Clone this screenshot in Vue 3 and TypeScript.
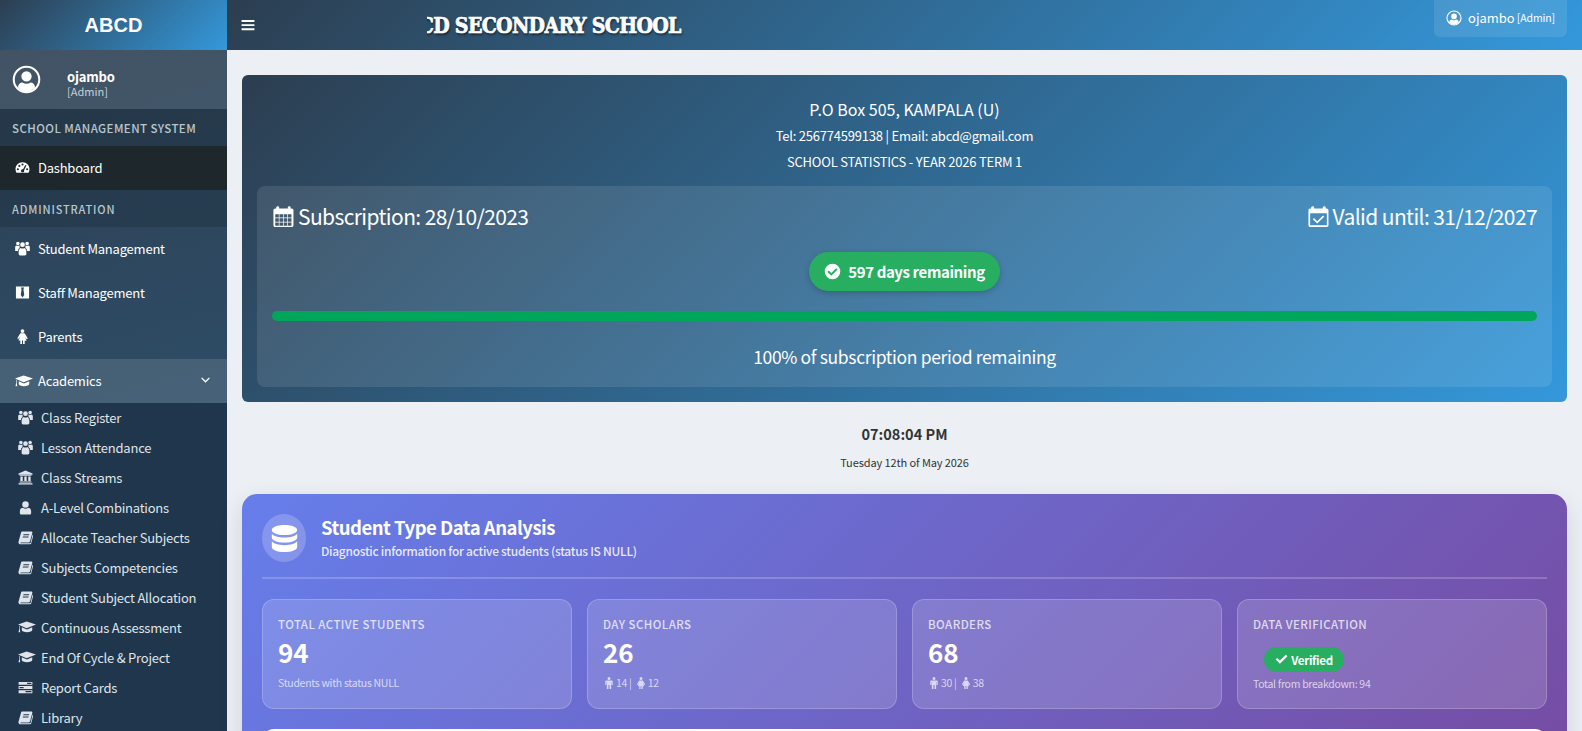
<script setup lang="ts">
// circle as a sub path, so holes and heads can sit in one path string
const dot = (x: number, y: number, r: number) =>
  `M${x - r} ${y}a${r} ${r} 0 1 0 ${r * 2} 0a${r} ${r} 0 1 0 ${-r * 2} 0z`

const calendarCells = () => {
  let d = ''
  for (let row = 0; row < 3; row++) {
    for (let col = 0; col < 4; col++) {
      d += `M${3.4 + col * 4.4} ${9.6 + row * 4.3}h3.7v3.5h-3.7z`
    }
  }
  return d
}

const calendarShell =
  'M6 1.2c.9 0 1.5.6 1.5 1.5v1h9v-1c0-.9.6-1.5 1.5-1.5s1.5.6 1.5 1.5v1h1c1.1 0 1.9.8 1.9 1.9V21c0 1.1-.8 1.9-1.9 1.9H3.4C2.3 22.9 1.5 22.1 1.5 21V5.6c0-1.1.8-1.9 1.9-1.9h1v-1c0-.9.6-1.5 1.6-1.5z'

const icons: Record<string, string> = {
  gauge:
    'M12 3.5C5.5 3.5.8 8.6.8 14.6c0 2 .6 3.9 1.6 5.6h19.2c1-1.7 1.6-3.6 1.6-5.6C23.2 8.6 18.5 3.5 12 3.5z' +
    dot(4.6, 14.8, 1.7) + dot(7, 9.4, 1.7) + dot(12, 7.2, 1.7) + dot(19.4, 14.8, 1.7) +
    'M16.5 7.8l1.8.8-3.7 7.8c.6 1.8-.4 3.3-2.4 3.3s-3-1.7-2.5-3.3c.5-1.3 1.8-2 3.2-1.7z',
  users:
    dot(4.6, 4, 2.9) + dot(19.4, 4, 2.9) + dot(12, 5.8, 3.8) +
    'M.3 16V10c0-1.8 1-3 2.3-3 .6.5 1.3.8 2 .8s1.4-.3 2-.8l.9.4-.3 3.6L5 13.5V16z' +
    'M23.7 16V10c0-1.8-1-3-2.3-3-.6.5-1.3.8-2 .8s-1.4-.3-2-.8l-.9.4.3 3.6 2.2 2.5V16z' +
    'M5.8 20.5v-3c0-3 1.5-6 3.3-6.5.8.7 1.8 1 2.9 1s2.1-.3 2.9-1c1.8.5 3.3 3.5 3.3 6.5v3c0 1.5-1 2.5-2.5 2.5H8.3c-1.5 0-2.5-1-2.5-2.5z',
  tie: 'M1.5 2.5h21v19h-21zM9.5 4h5l-1 2.8 1.3 9.2-2.8 3.8L9.2 16l1.3-9.2z',
  female:
    dot(12, 3.2, 3) +
    'M8.5 6.8h7l5 8.2-2.2 1.2-2.6-3.7 2.8 6.2H15.5V24h-2.7v-5.8h-1.6V24H8.5v-5.8H5.5l2.8-6.2-2.6 3.7L3.5 15z',
  male:
    dot(12, 3.2, 3) +
    'M7 7h10c1.5 0 2.5 1 2.5 2.5V16H17v-6h-.7v14h-3.2v-8h-2.2v8H7.7V10H7v6H4.5V9.5C4.5 8 5.5 7 7 7z',
  cap:
    'M11.5 4.5L0 8.8l11.5 4.7L24 8.8z' +
    'M5 12.3v3.7c0 1.7 3.3 3 7 3s7-1.3 7-3v-3.7l-7 2.9zM1.5 10.2v4.3L.7 19H3l-.7-4.5v-4z',
  bank:
    'M12 .8L.8 5.6v2h22.4v-2zM2.5 8.5h19v1h-19zM3.8 10.5h3.8v7H3.8zM10.1 10.5h3.8v7h-3.8zM16.4 10.5h3.8v7h-3.8zM2.5 18.5h19V20h-19zM.8 21h22.4v2.2H.8z',
  user:
    dot(12, 7, 5.2) +
    'M3 21v-2.5c0-4 2.2-6.3 4.8-6.3 1.1 1.2 2.5 1.8 4.2 1.8s3.1-.6 4.2-1.8c2.6 0 4.8 2.3 4.8 6.3V21c0 1.3-1 2.2-2.3 2.2H5.3C4 23.2 3 22.3 3 21z',
  book:
    'M7 2.5h14.5c1.2 0 1.8 1 1.4 2.1l-3.6 13.2c-.4 1.3-1.4 2.2-2.8 2.2H4.6c-.9 0-1.3 1.1-.2 1.3h14.7l.9-.4 3.3-13.3 1.2.8-3.3 12.7c-.3 1-1.2 1.7-2.2 1.7H4c-2.2 0-3.7-2-3.2-4.2L4.8 4.5C5.1 3.3 5.8 2.5 7 2.5z' +
    'M8.8 6.8l-.4 1.4h9.2l.4-1.4zM7.8 10.4l-.4 1.4h9.2l.4-1.4z',
  tasks:
    'M1 3h22v4.6H1zM14.5 4.3v2h7v-2zM1 9.7h22v4.6H1zM2.5 11v2H9v-2zM1 16.4h22V21H1zM12 17.7v2h9.5v-2z',
  calendar: calendarShell + calendarCells(),
  calendarCheck:
    calendarShell +
    'M3.3 8.7v12.4h17.4V8.7z' +
    'M16.7 11l1.2 1.2-7.2 7.1-4.6-4.5 1.2-1.2 3.4 3.3z',
  database:
    'M12 .8C5.7.8 1.5 2.7 1.5 5s4.2 4.2 10.5 4.2S22.5 7.3 22.5 5 18.3.8 12 .8z' +
    'M1.5 8c1.3 2 5.2 3.2 10.5 3.2S21.2 10 22.5 8v3.2c0 2.3-4.2 4.2-10.5 4.2S1.5 13.5 1.5 11.2z' +
    'M1.5 14.3c1.3 2 5.2 3.2 10.5 3.2s9.2-1.2 10.5-3.2V19c0 2.3-4.2 4.2-10.5 4.2S1.5 21.3 1.5 19z',
  checkCircle:
    dot(12, 12, 11) + 'M17.2 7.3l2 2-8.9 8.8-5.5-5.4 2-2 3.5 3.4z',
  check: 'M9 20L1 12l3-3 5 5L20 3l3 3z',
  userCircle:
    dot(12, 12, 11.4) + dot(12, 12, 9.7) +
    dot(12, 9.4, 4.3) +
    'M4.8 18.3c.4-2.6 2-3.9 3.9-3.9 1 .8 2.1 1.2 3.3 1.2s2.3-.4 3.3-1.2c1.9 0 3.5 1.3 3.9 3.9-1.7 2.1-4.3 3.5-7.2 3.5s-5.5-1.4-7.2-3.5z',
  bars: 'M1 3.5h22v3.3H1zM1 10.5h22v3.3H1zM1 17.5h22v3.3H1z',
  angleDown: 'M5 8.5L6.5 7l5.5 5.3L17.5 7 19 8.5l-7 7z',
}

const topMenu = [
  { label: 'Student Management', icon: 'users' },
  { label: 'Staff Management', icon: 'tie' },
  { label: 'Parents', icon: 'female' },
]

const academics = [
  { label: 'Class Register', icon: 'users' },
  { label: 'Lesson Attendance', icon: 'users' },
  { label: 'Class Streams', icon: 'bank' },
  { label: 'A-Level Combinations', icon: 'user' },
  { label: 'Allocate Teacher Subjects', icon: 'book' },
  { label: 'Subjects Competencies', icon: 'book' },
  { label: 'Student Subject Allocation', icon: 'book' },
  { label: 'Continuous Assessment', icon: 'cap' },
  { label: 'End Of Cycle & Project', icon: 'cap' },
  { label: 'Report Cards', icon: 'tasks' },
  { label: 'Library', icon: 'book' },
]

const studentStats = [
  { label: 'Total Active Students', value: '94', note: 'Students with status NULL' },
  { label: 'Day Scholars', value: '26', male: 14, female: 12 },
  { label: 'Boarders', value: '68', male: 30, female: 38 },
]
</script>

<template>
  <div class="page">
    <aside class="sidebar">
      <div class="logo">ABCD</div>
      <div class="user-panel">
        <svg class="avatar" viewBox="0 0 24 24"><path :d="icons.userCircle" fill-rule="evenodd" /></svg>
        <div class="user-info">
          <strong>ojambo</strong>
          <span>[Admin]</span>
        </div>
      </div>
      <div class="menu-header system">SCHOOL MANAGEMENT SYSTEM</div>
      <a class="menu-item active">
        <svg class="menu-icon" viewBox="0 0 24 24"><path :d="icons.gauge" fill-rule="evenodd" /></svg>
        Dashboard
      </a>
      <div class="menu-header">ADMINISTRATION</div>
      <a v-for="item in topMenu" :key="item.label" class="menu-item">
        <svg class="menu-icon" viewBox="0 0 24 24"><path :d="icons[item.icon]" fill-rule="evenodd" /></svg>
        {{ item.label }}
      </a>
      <a class="menu-item open">
        <svg class="menu-icon wide" viewBox="0 0 24 24"><path :d="icons.cap" fill-rule="evenodd" /></svg>
        Academics
        <svg class="chevron" viewBox="0 0 24 24"><path :d="icons.angleDown" /></svg>
      </a>
      <ul class="submenu">
        <li v-for="item in academics" :key="item.label">
          <svg class="menu-icon" :class="{ wide: item.icon === 'cap' }" viewBox="0 0 24 24">
            <path :d="icons[item.icon]" fill-rule="evenodd" />
          </svg>
          {{ item.label }}
        </li>
      </ul>
    </aside>

    <div class="main">
      <header class="topbar">
        <button class="toggle" aria-label="Toggle navigation">
          <svg viewBox="0 0 24 24"><path :d="icons.bars" /></svg>
        </button>
        <div class="marquee"><span>ABCD SECONDARY SCHOOL</span></div>
        <div class="top-user">
          <svg viewBox="0 0 24 24"><path :d="icons.userCircle" fill-rule="evenodd" /></svg>
          <span class="top-name">ojambo</span>
          <small>[Admin]</small>
        </div>
      </header>

      <main class="content">
        <section class="hero">
          <p class="address">P.O Box 505, KAMPALA (U)</p>
          <p class="contact">Tel: 256774599138 | Email: abcd@gmail.com</p>
          <p class="contact">SCHOOL STATISTICS - YEAR 2026 TERM 1</p>

          <div class="subscription">
            <div class="dates">
              <span>
                <svg viewBox="0 0 24 24"><path :d="icons.calendar" fill-rule="evenodd" /></svg>
                Subscription: 28/10/2023
              </span>
              <span>
                <svg viewBox="0 0 24 24"><path :d="icons.calendarCheck" fill-rule="evenodd" /></svg>
                Valid until: 31/12/2027
              </span>
            </div>
            <div class="days-pill">
              <svg viewBox="0 0 24 24"><path :d="icons.checkCircle" fill-rule="evenodd" /></svg>
              597 days remaining
            </div>
            <div class="progress"><div class="progress-bar" :style="{ width: '100%' }"></div></div>
            <p class="progress-note">100% of subscription period remaining</p>
          </div>
        </section>

        <div class="clock">
          <strong>07:08:04 PM</strong>
          <span>Tuesday 12th of May 2026</span>
        </div>

        <section class="analysis">
          <div class="analysis-head">
            <div class="analysis-icon">
              <svg viewBox="0 0 24 24"><path :d="icons.database" /></svg>
            </div>
            <div>
              <h2>Student Type Data Analysis</h2>
              <p>Diagnostic information for active students (status IS NULL)</p>
            </div>
          </div>

          <div class="stat-grid">
            <div v-for="stat in studentStats" :key="stat.label" class="stat-card">
              <div class="stat-label">{{ stat.label }}</div>
              <div class="stat-value">{{ stat.value }}</div>
              <div class="stat-note">
                <template v-if="stat.note">{{ stat.note }}</template>
                <template v-else>
                  <svg viewBox="0 0 24 24"><path :d="icons.male" /></svg>
                  <span>{{ stat.male }} |</span>
                  <svg viewBox="0 0 24 24"><path :d="icons.female" /></svg>
                  <span>{{ stat.female }}</span>
                </template>
              </div>
            </div>
            <div class="stat-card">
              <div class="stat-label">Data Verification</div>
              <div class="verified">
                <svg viewBox="0 0 24 24"><path :d="icons.check" /></svg>
                Verified
              </div>
              <div class="stat-note">Total from breakdown: 94</div>
            </div>
          </div>

          <div class="next-card"></div>
        </section>
      </main>
    </div>
  </div>
</template>

<style>
html,
body {
  margin: 0;
  height: 100%;
  overflow: hidden;
  background: #ecf0f5;
}
</style>

<style scoped>
.page {
  display: flex;
  height: 731px;
  overflow: hidden;
  background: #ecf0f5;
  color: #333;
  font-family: "Noto Sans CJK SC", "Open Sans", sans-serif;
  font-size: 14px;
}

svg {
  fill: currentColor;
  flex-shrink: 0;
}

.sidebar {
  width: 227px;
  flex-shrink: 0;
  color: #fff;
  background: linear-gradient(165deg, #2c3e50 0, #2f5675 730px);
}

.logo {
  height: 50px;
  line-height: 50px;
  text-align: center;
  font-family: "Liberation Sans", Arial, sans-serif;
  font-size: 20px;
  font-weight: 700;
  background: linear-gradient(135deg, #2c3e50, #3498db);
}

.user-panel {
  display: flex;
  align-items: center;
  height: 59px;
  padding-left: 12px;
  background: rgba(255, 255, 255, 0.1);
}

.avatar {
  width: 29px;
  height: 29px;
}

.user-info {
  display: flex;
  flex-direction: column;
  margin-left: 26px;
  padding-top: 9px;
  line-height: 15px;
}

.user-info strong {
  font-size: 13px;
  letter-spacing: -0.2px;
}

.user-info span {
  font-size: 11px;
  color: #c6d0da;
}

.menu-header {
  height: 37px;
  line-height: 39px;
  padding-left: 12px;
  white-space: nowrap;
  font-size: 11px;
  font-weight: 500;
  letter-spacing: 0.85px;
  color: #b8c7ce;
  background: rgba(0, 0, 0, 0.14);
}

.menu-header.system {
  font-size: 11.5px;
  letter-spacing: 0.42px;
}

.menu-item {
  position: relative;
  display: flex;
  align-items: center;
  height: 44px;
  box-sizing: border-box;
  padding: 0 0 1px 15px;
  font-size: 13px;
  letter-spacing: -0.22px;
  color: #fff;
}

.menu-item.active {
  background: #1e282c;
}

.menu-item.open {
  background: rgba(255, 255, 255, 0.12);
}

.menu-icon {
  width: 15px;
  height: 15px;
  margin-right: 8px;
}

.menu-icon.wide {
  width: 18px;
  height: 18px;
  margin-right: 5px;
}

.chevron {
  position: absolute;
  right: 14px;
  top: 14px;
  width: 15px;
  height: 15px;
}

.submenu {
  list-style: none;
  margin: 0;
  padding: 0;
  height: 340px;
  font-size: 13px;
  letter-spacing: -0.22px;
  background: #1f364c;
  color: #dfe5ea;
}

.submenu li {
  display: flex;
  align-items: center;
  height: 30px;
  box-sizing: border-box;
  padding: 0 0 2px 18px;
}

.main {
  flex: 1;
  min-width: 0;
}

.topbar {
  position: relative;
  display: flex;
  height: 50px;
  color: #fff;
  background: linear-gradient(135deg, #2c3e50, #3498db);
}

.toggle {
  width: 14px;
  height: 14px;
  margin: 18px 0 0 14px;
  padding: 0;
  border: 0;
  background: none;
  color: #fff;
}

.toggle svg {
  display: block;
  width: 14px;
  height: 14px;
}

.marquee {
  width: 300px;
  height: 50px;
  margin-left: 172px;
  overflow: hidden;
  white-space: nowrap;
}

.marquee span {
  display: inline-block;
  margin-left: -38px;
  line-height: 50px;
  font-family: "DejaVu Serif", serif;
  font-size: 19px;
  font-weight: 700;
  letter-spacing: -0.7px;
  color: #fff;
  -webkit-text-stroke: 0.6px #fff;
  text-shadow: 1px 1px 2px rgba(0, 0, 0, 0.55);
  transform: scaleY(1.2);
}

.top-user {
  position: absolute;
  top: 0;
  right: 15px;
  display: flex;
  align-items: center;
  width: 133px;
  height: 37px;
  box-sizing: border-box;
  padding: 0 0 2px 12px;
  border-radius: 0 0 6px 6px;
  background: rgba(255, 255, 255, 0.1);
}

.top-user svg {
  width: 16px;
  height: 16px;
  margin-right: 6px;
}

.top-name {
  font-size: 13px;
}

.top-user small {
  margin-left: 2px;
  font-size: 10.5px;
  letter-spacing: -0.1px;
}

.content {
  padding: 25px 15px 0;
}

.hero {
  height: 327px;
  box-sizing: border-box;
  padding: 20px 15px 0;
  border-radius: 6px;
  color: #fff;
  text-align: center;
  background: linear-gradient(135deg, #2c3e50, #3498db);
}

.hero p {
  margin: 0;
}

.address {
  font-size: 16px;
  line-height: 28px;
}

.contact {
  font-size: 13px;
  line-height: 26px;
  letter-spacing: -0.22px;
}

.subscription {
  height: 201px;
  box-sizing: border-box;
  margin-top: 11px;
  padding: 15px;
  border-radius: 8px;
  background: rgba(255, 255, 255, 0.1);
}

.dates {
  display: flex;
  justify-content: space-between;
  font-size: 21px;
  letter-spacing: -0.6px;
  line-height: 30px;
}

.dates span {
  display: flex;
  align-items: center;
  gap: 3px;
}

.dates svg {
  width: 23px;
  height: 23px;
}

.days-pill {
  display: flex;
  align-items: center;
  justify-content: center;
  gap: 7px;
  width: 191px;
  height: 39px;
  margin: 21px auto 0;
  border-radius: 20px;
  font-size: 15px;
  font-weight: 700;
  letter-spacing: -0.4px;
  background: #27ae60;
  box-shadow: 0 2px 6px rgba(0, 0, 0, 0.2);
}

.days-pill svg {
  width: 17px;
  height: 17px;
}

.progress {
  height: 10px;
  margin-top: 20px;
  border-radius: 5px;
  overflow: hidden;
  background: rgba(255, 255, 255, 0.2);
}

.progress-bar {
  height: 100%;
  background: #00a65a;
}

.subscription .progress-note {
  margin-top: 23px;
  font-size: 17.5px;
  letter-spacing: -0.35px;
  line-height: 26px;
}

.clock {
  display: flex;
  flex-direction: column;
  align-items: center;
  height: 92px;
  padding-top: 22px;
  box-sizing: border-box;
}

.clock strong {
  font-size: 14.5px;
  line-height: 20px;
}

.clock span {
  margin-top: 11px;
  font-size: 11px;
  letter-spacing: -0.1px;
  line-height: 14px;
}

.analysis {
  height: 300px;
  box-sizing: border-box;
  padding: 20px;
  border-radius: 15px;
  color: #fff;
  background: linear-gradient(135deg, #667eea, #764ba2);
  box-shadow: 0 8px 24px rgba(0, 0, 0, 0.12);
}

.analysis-head {
  display: flex;
  align-items: flex-start;
  gap: 15px;
  height: 63px;
  border-bottom: 2px solid rgba(255, 255, 255, 0.2);
}

.analysis-icon {
  display: flex;
  align-items: center;
  justify-content: center;
  width: 44px;
  height: 48px;
  border-radius: 50%;
  background: rgba(255, 255, 255, 0.2);
}

.analysis-icon svg {
  width: 29px;
  height: 29px;
}

.analysis-head h2 {
  margin: 0;
  font-size: 18.5px;
  font-weight: 700;
  letter-spacing: -0.5px;
  line-height: 26px;
}

.analysis-head p {
  margin: 1px 0 0;
  font-size: 12px;
  font-weight: 500;
  letter-spacing: -0.3px;
  line-height: 20px;
  color: rgba(255, 255, 255, 0.85);
}

.stat-grid {
  display: grid;
  grid-template-columns: repeat(4, 1fr);
  gap: 15px;
  margin-top: 20px;
}

.stat-card {
  height: 110px;
  box-sizing: border-box;
  padding: 15px;
  border: 1px solid rgba(255, 255, 255, 0.2);
  border-radius: 12px;
  background: rgba(255, 255, 255, 0.15);
}

.stat-label {
  font-size: 11.5px;
  font-weight: 500;
  line-height: 18px;
  letter-spacing: 0.43px;
  text-transform: uppercase;
  color: rgba(255, 255, 255, 0.75);
}

.stat-value {
  margin-top: 2px;
  font-size: 26px;
  font-weight: 700;
  line-height: 34px;
}

.stat-note {
  display: flex;
  align-items: center;
  gap: 1px;
  margin-top: 7px;
  font-size: 10.5px;
  letter-spacing: -0.3px;
  line-height: 14px;
  color: rgba(255, 255, 255, 0.7);
}

.stat-note svg {
  width: 12px;
  height: 12px;
}

.stat-note span + svg {
  margin-left: 2px;
}

.verified {
  display: flex;
  align-items: center;
  justify-content: center;
  gap: 3px;
  width: 80px;
  height: 25px;
  margin: 14px 0 0 11px;
  border-radius: 13px;
  font-size: 11.5px;
  font-weight: 700;
  letter-spacing: -0.3px;
  background: #27ae60;
}

.verified svg {
  width: 13px;
  height: 13px;
}

.verified + .stat-note {
  margin-top: 5px;
}

.next-card {
  height: 40px;
  margin-top: 20px;
  border-radius: 12px;
  background: #fff;
}
</style>
